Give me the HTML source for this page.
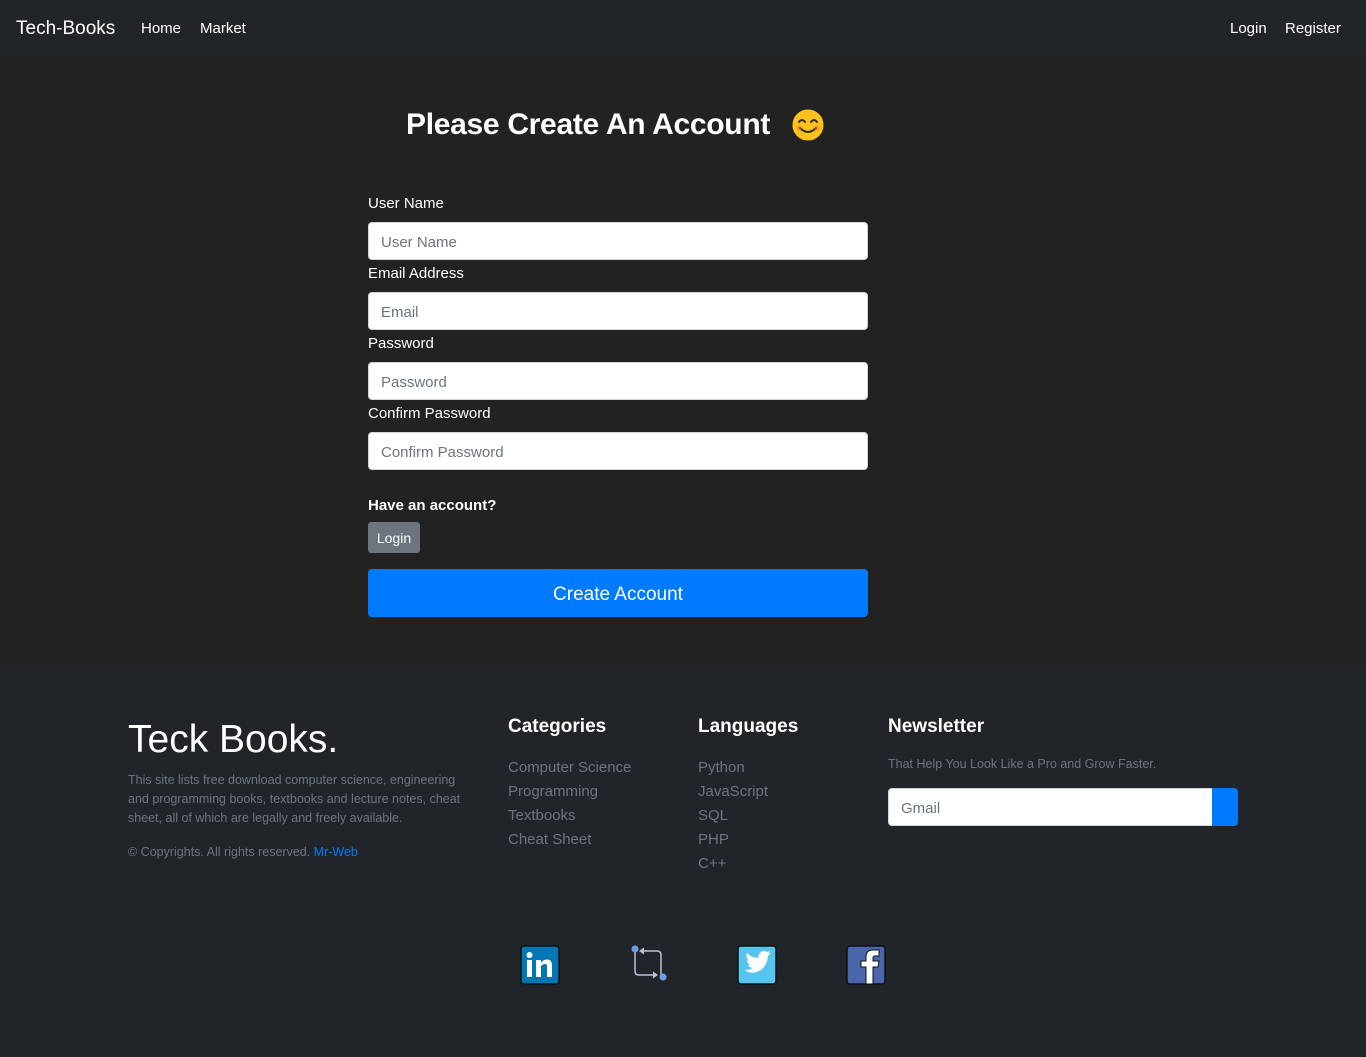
<!DOCTYPE html>
<html><head><meta charset="utf-8"><style>
*{box-sizing:border-box;margin:0;padding:0}
body{width:1366px;height:1057px;background:#222222;font-family:"Liberation Sans",sans-serif;position:relative;overflow:hidden;color:#fff}
.a{position:absolute;white-space:nowrap}
nav{position:absolute;left:0;top:0;width:1366px;height:57px;background:#212529}
.inp{position:absolute;left:368px;width:500px;height:38px;background:#fff;border:1px solid #ced4da;border-radius:4px;color:#6c757d;font-size:15px;padding:11px 12px 7px}
.lbl{position:absolute;left:368px;font-size:15px;color:#fff}
footer{position:absolute;left:0;top:665px;width:1366px;height:392px;background:#212529}
.g{color:#6c757d;font-size:15px}
</style></head><body>
<nav>
<span class="a" style="left:16px;top:18px;font-size:19px">Tech-Books</span>
<span class="a" style="left:141px;top:20px;font-size:15px">Home</span>
<span class="a" style="left:200px;top:20px;font-size:15px">Market</span>
<span class="a" style="left:1230px;top:20px;font-size:15px">Login</span>
<span class="a" style="left:1285px;top:20px;font-size:15px">Register</span>
</nav>
<span class="a" style="left:406px;top:108px;font-size:30px;font-weight:bold;letter-spacing:-0.3px">Please Create An Account</span>
<svg class="a" style="left:790px;top:107px" width="36" height="36" viewBox="0 0 36 36"><circle cx="18" cy="18" r="16.5" fill="#fcc21b" stroke="#222" stroke-width="2"/><path d="M9 15q3-4 6 0M21 15q3-4 6 0" stroke="#2f2f2f" stroke-width="2" fill="none" stroke-linecap="round"/><path d="M10 21q8 8 16 0" stroke="#2f2f2f" stroke-width="2" fill="none" stroke-linecap="round"/><circle cx="9" cy="21" r="2.5" fill="#ed6c30" opacity=".5"/><circle cx="27" cy="21" r="2.5" fill="#ed6c30" opacity=".5"/></svg>
<div class="lbl" style="top:195px">User Name</div>
<div class="inp" style="top:222px">User Name</div>
<div class="lbl" style="top:265px">Email Address</div>
<div class="inp" style="top:292px">Email</div>
<div class="lbl" style="top:335px">Password</div>
<div class="inp" style="top:362px">Password</div>
<div class="lbl" style="top:405px">Confirm Password</div>
<div class="inp" style="top:432px">Confirm Password</div>
<div class="lbl" style="top:497px;font-weight:bold">Have an account?</div>
<div class="a" style="left:368px;top:522px;width:52px;height:31px;background:#6c757d;border-radius:3px;font-size:14px;text-align:center;line-height:33px">Login</div>
<div class="a" style="left:368px;top:569px;width:500px;height:48px;background:#007bff;border-radius:4px;font-size:19px;text-align:center;line-height:51px">Create Account</div>
<footer>
<span class="a" style="left:128px;top:53px;font-size:39px">Teck Books.</span>
<div class="a g" style="left:128px;top:106px;font-size:12.5px;line-height:19px;white-space:normal;width:350px">This site lists free download computer science, engineering and programming books, textbooks and lecture notes, cheat sheet, all of which are legally and freely available.</div>
<span class="a g" style="left:128px;top:180px;font-size:12.5px">© Copyrights. All rights reserved. <span style="color:#007bff">Mr-Web</span></span>
<span class="a" style="left:508px;top:51px;font-size:19px;font-weight:bold">Categories</span>
<div class="a g" style="left:508px;top:91px;line-height:24px">Computer Science<br>Programming<br>Textbooks<br>Cheat Sheet</div>
<span class="a" style="left:698px;top:51px;font-size:19px;font-weight:bold">Languages</span>
<div class="a g" style="left:698px;top:91px;line-height:24px">Python<br>JavaScript<br>SQL<br>PHP<br>C++</div>
<span class="a" style="left:888px;top:51px;font-size:19px;font-weight:bold">Newsletter</span>
<span class="a g" style="left:888px;top:92px;font-size:12.5px">That Help You Look Like a Pro and Grow Faster.</span>
<div class="a" style="left:888px;top:123px;width:326px;height:38px;background:#fff;border:1px solid #ced4da;border-radius:4px 0 0 4px;color:#6c757d;font-size:15px;padding:11px 12px 7px">Gmail</div>
<div class="a" style="left:1212px;top:123px;width:26px;height:38px;background:#007bff;border-radius:0 4px 4px 0"></div>
<svg class="a" style="left:520px;top:280px" width="40" height="40"><rect x="1" y="1" width="38" height="38" rx="3" fill="#0077b5" stroke="#111" stroke-width="1.5"/><rect x="7" y="15" width="5" height="17" fill="#fff"/><circle cx="9.5" cy="10" r="3" fill="#fff"/><path d="M16 15h5v3q2-3.5 6-3.5q5 0 5 6v11.5h-5v-11q0-2-2-2t-4 2v11h-5z" fill="#fff"/></svg>
<svg class="a" style="left:628px;top:279px" width="42" height="42"><path d="M7 7v20q0 4 4 4h14M33 33v-22q0-4-4-4h-16" stroke="#b8c4d6" stroke-width="1.5" fill="none"/><path d="M11 7l5-3.5v7z M30 31l-5-3.5v7z" fill="#b8c4d6"/><circle cx="7" cy="5" r="3.5" fill="#6f9de8"/><circle cx="35" cy="33" r="3.5" fill="#6f9de8"/></svg>
<svg class="a" style="left:737px;top:280px" width="40" height="40"><rect x="1" y="1" width="38" height="38" rx="3" fill="#55c5ef" stroke="#111" stroke-width="1.5"/><path d="M8 25q6 5 14 1t9-15l3-3-3 1 2-3-3 1q-4-3-7 1t-1 5q-7 0-12-5q-2 4 2 8l-2-1q0 3 3 5h-2q2 3 5 3q-4 2-8 2z" fill="#fff"/></svg>
<svg class="a" style="left:846px;top:280px" width="40" height="40"><rect x="1" y="1" width="38" height="38" rx="3" fill="#4a67ad" stroke="#111" stroke-width="1.5"/><path d="M20 39v-17h-5v-6h5v-4q0-7 7-7h6v6h-4q-2 0-2 2v3h6l-1 6h-5v17z" fill="#fff" stroke="#111"/></svg>
</footer>
</body></html>
